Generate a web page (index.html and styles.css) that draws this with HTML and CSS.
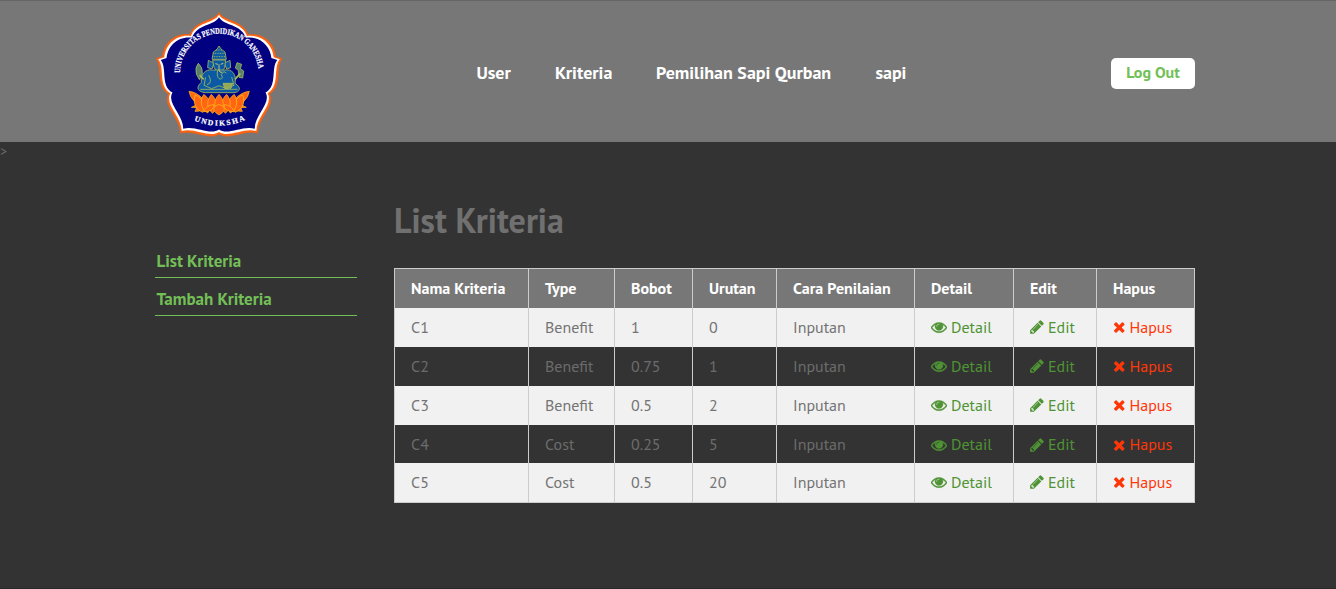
FILE: index.html
```
<!DOCTYPE html>
<html lang="id">
<head>
<meta charset="utf-8">
<title>List Kriteria</title>
<link rel="stylesheet" href="styles.css">
</head>
<body>
<svg class="defs" aria-hidden="true">
  <symbol id="eye" viewBox="0 0 1792 1792"><path d="M1664 960q-152-236-381-353 61 104 61 225 0 185-131.5 316.5t-316.5 131.5-316.5-131.5-131.5-316.5q0-121 61-225-229 117-381 353 133 205 333.5 326.5t434.5 121.5 434.5-121.5 333.5-326.5zm-720-384q0-20-14-34t-34-14q-125 0-214.5 89.5t-89.5 214.5q0 20 14 34t34 14 34-14 14-34q0-86 61-147t147-61q20 0 34-14t14-34zm848 384q0 34-20 69-140 230-376.5 368.5t-499.5 138.5-499.5-139-376.5-368q-20-35-20-69t20-69q140-229 376.5-368t499.5-139 499.5 139 376.5 368q20 35 20 69z"/></symbol>
  <symbol id="pencil" viewBox="128 0 1536 1792"><path d="M491 1536l91-91-235-235-91 91v107h128v128h107zm523-928q0-22-22-22-10 0-17 7l-542 542q-7 7-7 17 0 22 22 22 10 0 17-7l542-542q7-7 7-17zm-54-192l416 416-832 832h-416v-416zm683 96q0 53-37 90l-166 166-416-416 166-165q36-38 90-38 53 0 91 38l235 234q37 39 37 91z"/></symbol>
  <symbol id="times" viewBox="192 0 1408 1792"><path d="M1490 1322q0 40-28 68l-136 136q-28 28-68 28t-68-28l-294-294-294 294q-28 28-68 28t-68-28l-136-136q-28-28-28-68t28-68l294-294-294-294q-28-28-28-68t28-68l136-136q28-28 68-28t68 28l294 294 294-294q28-28 68-28t68 28l136 136q28 28 28 68t-28 68l-294 294 294 294q28 28 28 68z"/></symbol>
</svg>
<header class="header">
  <svg class="logo" viewBox="30 30 384 384">
    <defs>
      <path id="badge" d="M222 38C238 66 294 60 309 104C355 98 388 130 392 170L411 176C389 204 413 258 373 282C393 316 338 354 338 399C296 388 252 422 222 402C192 422 148 388 106 399C106 354 51 316 71 282C31 258 55 204 33 176L52 170C56 130 89 98 135 104C150 60 206 66 222 38Z"/>
      <path id="arc-top" d="M105 219A118 118 0 0 1 341 219"/>
      <path id="arc-bottom" d="M147 361Q222 394 299 360"/>
      <path id="petal" d="M222 340C205 325 205 300 222 283C239 300 239 325 222 340Z"/>
    </defs>
    <use href="#badge" fill="#ff6412" stroke="#e8611b" stroke-width="2.5"/>
    <use href="#badge" fill="#fff" transform="translate(222 226) scale(.965) translate(-222 -226)"/>
    <use href="#badge" fill="#000080" transform="translate(222 226) scale(.925) translate(-222 -226)"/>
    <text class="logo-name"><textPath href="#arc-top" textLength="358" lengthAdjust="spacingAndGlyphs">UNIVERSITAS PENDIDIKAN GANESHA</textPath></text>
    <text class="logo-short"><textPath href="#arc-bottom" textLength="158" lengthAdjust="spacing">UNDIKSHA</textPath></text>
    <g fill="#0b59a4" stroke="#a4b958" stroke-width="2.5" stroke-linejoin="round">
      <path d="M190 181L188 203 201 207 207 189zM255 181L257 203 245 207 238 189z"/>
      <path d="M201 178L205 156 216 148 222 138 229 148 240 156 244 178z"/>
      <path d="M202 170H243M205 160H240M213 150H232" fill="none" stroke-dasharray="3 2"/>
      <path d="M203 180H242L239 204 230 214 216 214 207 203z"/>
      <path d="M202 210C182 206 165 224 169 247C150 264 160 276 181 278H266C286 277 290 262 270 250C276 222 259 206 240 210z"/>
      <path d="M182 232L177 256 200 266 222 257 244 266 267 256 260 231M166 268H277M191 226Q204 249 186 254M218 211C210 245 241 242 229 224Q237 209 244 220" fill="none"/>
      <path d="M160 190Q149 203 154 222L163 239 172 220Q174 202 160 190zM276 188L290 193 286 206 296 213 293 234 282 232 280 211 271 204z" fill="#577f70"/>
      <path d="M176 238L164 225M270 238L286 220" stroke-width="5"/>
      <path d="M234 250H263L258 265H239z" fill="#95a955"/>
      <path d="M211 191L219 193M227 193L235 190M222 193V208Q223 220 232 216" fill="none" stroke="#e8de61"/>
    </g>
    <g fill="#ff6512" stroke="#ffc21b" stroke-width="2">
      <path d="M132 274Q156 276 176 299L182 318Q138 310 132 274zM313 274Q289 276 268 299L262 318Q307 310 313 274z"/>
      <path d="M139 322Q172 304 190 317Q171 336 150 334L155 323zM304 322Q271 304 254 317Q273 336 292 334L287 323z"/>
      <use href="#petal" transform="translate(-48 -3) rotate(-24 222 340)"/><use href="#petal" transform="translate(48 -3) rotate(24 222 340)"/>
      <use href="#petal" transform="translate(-34 -1) rotate(-12 222 340)"/><use href="#petal" transform="translate(34 -1) rotate(12 222 340)"/>
      <use href="#petal" transform="translate(-19 0) rotate(-4 222 340)"/><use href="#petal" transform="translate(19 0) rotate(4 222 340)"/><use href="#petal"/>
      <path d="M176 335Q184 315 207 314Q207 335 176 335zM268 335Q260 315 237 314Q237 335 268 335zM222 345Q198 331 210 319L222 313 234 319Q246 331 222 345z"/>
    </g>
  </svg>
  <nav class="nav">
    <a class="nav-user">User</a><a class="nav-kriteria">Kriteria</a><a class="nav-pemilihan">Pemilihan Sapi Qurban</a><a>sapi</a>
  </nav>
  <a class="logout">Log Out</a>
</header>
<div class="stray">&gt;</div>
<div class="content">
  <aside class="sidebar"><a>List Kriteria</a><a>Tambah Kriteria</a></aside>
  <main class="main">
    <h1>List Kriteria</h1>
    <table class="table">
      <colgroup><col class="c-name"><col class="c-type"><col class="c-bobot"><col class="c-urutan"><col class="c-cara"><col class="c-detail"><col class="c-edit"><col class="c-hapus"></colgroup>
      <thead><tr><th>Nama Kriteria</th><th>Type</th><th>Bobot</th><th>Urutan</th><th>Cara Penilaian</th><th>Detail</th><th>Edit</th><th>Hapus</th></tr></thead>
      <tbody>
        <tr><td>C1</td><td>Benefit</td><td>1</td><td>0</td><td>Inputan</td><td><a class="act"><svg class="i-eye"><use href="#eye"/></svg>Detail</a></td><td><a class="act"><svg class="i-pencil"><use href="#pencil"/></svg>Edit</a></td><td><a class="act del"><svg class="i-times"><use href="#times"/></svg>Hapus</a></td></tr>
        <tr><td>C2</td><td>Benefit</td><td>0.75</td><td>1</td><td>Inputan</td><td><a class="act"><svg class="i-eye"><use href="#eye"/></svg>Detail</a></td><td><a class="act"><svg class="i-pencil"><use href="#pencil"/></svg>Edit</a></td><td><a class="act del"><svg class="i-times"><use href="#times"/></svg>Hapus</a></td></tr>
        <tr><td>C3</td><td>Benefit</td><td>0.5</td><td>2</td><td>Inputan</td><td><a class="act"><svg class="i-eye"><use href="#eye"/></svg>Detail</a></td><td><a class="act"><svg class="i-pencil"><use href="#pencil"/></svg>Edit</a></td><td><a class="act del"><svg class="i-times"><use href="#times"/></svg>Hapus</a></td></tr>
        <tr class="short"><td>C4</td><td>Cost</td><td>0.25</td><td>5</td><td>Inputan</td><td><a class="act"><svg class="i-eye"><use href="#eye"/></svg>Detail</a></td><td><a class="act"><svg class="i-pencil"><use href="#pencil"/></svg>Edit</a></td><td><a class="act del"><svg class="i-times"><use href="#times"/></svg>Hapus</a></td></tr>
        <tr><td>C5</td><td>Cost</td><td>0.5</td><td>20</td><td>Inputan</td><td><a class="act"><svg class="i-eye"><use href="#eye"/></svg>Detail</a></td><td><a class="act"><svg class="i-pencil"><use href="#pencil"/></svg>Edit</a></td><td><a class="act del"><svg class="i-times"><use href="#times"/></svg>Hapus</a></td></tr>
      </tbody>
    </table>
  </main>
</div>
</body>
</html>
```
FILE: styles.css
```
* { box-sizing: border-box; }
body {
  margin: 0;
  height: 589px;
  overflow: hidden;
  background: #333;
  color: #747474;
  font: 16px/20px "PT Sans", "Noto Sans", sans-serif;
  border-bottom: 1px solid #292929;
}
.defs { display: none; }
.header {
  display: flex;
  align-items: flex-start;
  height: 142px;
  padding: 9px 141px 0 155px;
  background: #777;
  border-top: 1px solid #666;
}
.logo { width: 128px; height: 128px; flex: none; }
.logo-name { fill: #fff; stroke: #fff; stroke-width: .6; font: bold 25px "Liberation Serif", serif; }
.logo-short { fill: #fff; stroke: #fff; stroke-width: .6; font: bold 23px "Liberation Serif", serif; }
.nav {
  display: flex;
  margin: 50px 0 0 193.4px;
  color: #fff;
  font-size: 18px;
  line-height: 26px;
  font-weight: bold;
  white-space: nowrap;
}
.nav-user { width: 78.6px; }
.nav-kriteria { width: 101px; }
.nav-pemilihan { width: 219.4px; }
.logout {
  width: 84px;
  height: 31px;
  margin: 48px 0 0 auto;
  border-radius: 5px;
  background: #fff;
  color: #73bf57;
  font-size: 16px;
  font-weight: bold;
  line-height: 29px;
  text-align: center;
}
.stray { height: 20px; font-size: 14px; line-height: 19px; color: #6c6c6c; }
.content { display: flex; padding-left: 155px; }
.sidebar { width: 202px; padding-top: 84px; }
.sidebar a {
  display: block;
  height: 32px;
  padding: 2px 1.4px 0;
  border-bottom: 1px solid #73bf57;
  color: #73bf57;
  font-size: 17px;
  line-height: 26px;
  font-weight: bold;
}
.sidebar a + a { height: 38px; padding-top: 8px; }
.main { margin-left: 37px; padding-top: 35px; }
h1 { margin: 0 0 25px; font-size: 34px; line-height: 46px; color: #707070; }
.table {
  width: 801px;
  table-layout: fixed;
  border-spacing: 0;
  border: solid #ccc;
  border-width: 1px 1px 1px 0;
}
.c-name { width: 134px; }
.c-type { width: 86px; }
.c-bobot { width: 78px; }
.c-urutan { width: 84px; }
.c-cara { width: 138px; }
.c-detail { width: 99px; }
.c-edit { width: 83px; }
.c-hapus { width: 98px; }
th, td { height: 39px; padding: 0 0 2px 16px; border-left: 1px solid #ccc; text-align: left; white-space: nowrap; }
th { background: #777; color: #fff; }
tr:nth-child(odd) td { background: #f1f1f1; }
tr:nth-child(even) td { color: #6c6c6c; }
.short td { height: 38px; padding-bottom: 0; }
.act { display: flex; align-items: center; gap: 4px; color: #4e9334; }
.act svg { height: 16px; margin-top: 1px; fill: currentColor; flex: none; }
.act .i-eye { width: 16px; stroke: currentColor; stroke-width: 45px; }
.i-pencil { width: 14px; }
.i-times { width: 12.5px; }
.act.del { color: #ff3708; }
```
